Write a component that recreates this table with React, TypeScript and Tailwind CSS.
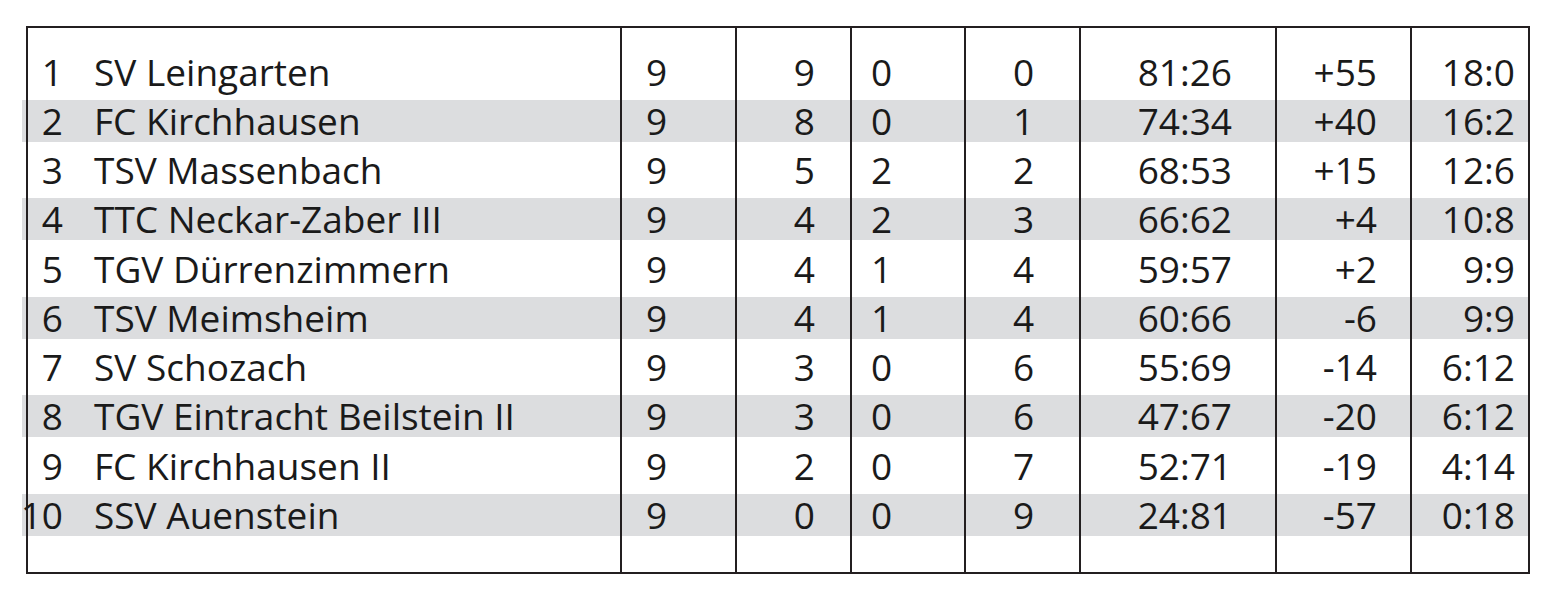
const rows: [string, string, number, number, number, number, string, string, string][] = [
  ["1", "SV Leingarten", 9, 9, 0, 0, "81:26", "+55", "18:0"],
  ["2", "FC Kirchhausen", 9, 8, 0, 1, "74:34", "+40", "16:2"],
  ["3", "TSV Massenbach", 9, 5, 2, 2, "68:53", "+15", "12:6"],
  ["4", "TTC Neckar-Zaber III", 9, 4, 2, 3, "66:62", "+4", "10:8"],
  ["5", "TGV Dürrenzimmern", 9, 4, 1, 4, "59:57", "+2", "9:9"],
  ["6", "TSV Meimsheim", 9, 4, 1, 4, "60:66", "-6", "9:9"],
  ["7", "SV Schozach", 9, 3, 0, 6, "55:69", "-14", "6:12"],
  ["8", "TGV Eintracht Beilstein II", 9, 3, 0, 6, "47:67", "-20", "6:12"],
  ["9", "FC Kirchhausen II", 9, 2, 0, 7, "52:71", "-19", "4:14"],
  ["10", "SSV Auenstein", 9, 0, 0, 9, "24:81", "-57", "0:18"],
];

const cell = "border-l-2 border-[#231f20] shrink-0";

function Cells({ values, pad }: { values?: (string | number)[]; pad: string }) {
  const v = values ?? ["", "", "", "", "", "", "", "", ""];
  return (
    <>
      <div className={`${cell} ${pad} ml-[4px] w-[594px] flex items-center`}>
        <span className="w-[35px] flex justify-end">{v[0]}</span>
        <span className="ml-[31px] whitespace-nowrap">{v[1]}</span>
      </div>
      <div className={`${cell} ${pad} w-[115px] pl-[24px]`}>{v[2]}</div>
      <div className={`${cell} ${pad} w-[115px] pr-[35px] text-right`}>{v[3]}</div>
      <div className={`${cell} ${pad} w-[114px] pl-[19px]`}>{v[4]}</div>
      <div className={`${cell} ${pad} w-[115px] pl-[47px]`}>{v[5]}</div>
      <div className={`${cell} ${pad} w-[196px] pr-[43px] text-right`}>{v[6]}</div>
      <div className={`${cell} ${pad} w-[135px] pr-[33px] text-right`}>{v[7]}</div>
      <div className={`${cell} ${pad} w-[118px] pr-[13px] text-right`}>{v[8]}</div>
    </>
  );
}

export default function App() {
  return (
    <div className="w-[1560px] h-[603px] bg-white pt-[26px] font-['Open_Sans',sans-serif] font-medium text-[37px] leading-[42px] text-[#1a1a1a]">
      <div className="ml-[26px] w-[1504px] border-t-2 border-b-2 border-r-2 border-[#231f20]">
        <div className="-ml-[4px] flex h-[19px]">
          <Cells pad="" />
        </div>
        {rows.map((r, i) => (
          <div
            key={r[0]}
            className={`-ml-[4px] flex py-[3.625px] bg-clip-content ${i % 2 === 1 ? "bg-[#dcdddf]" : ""}`}
          >
            <Cells values={r} pad="-my-[3.625px] py-[3.625px]" />
          </div>
        ))}
        <div className="-ml-[4px] flex h-[32px]">
          <Cells pad="" />
        </div>
      </div>
    </div>
  );
}
